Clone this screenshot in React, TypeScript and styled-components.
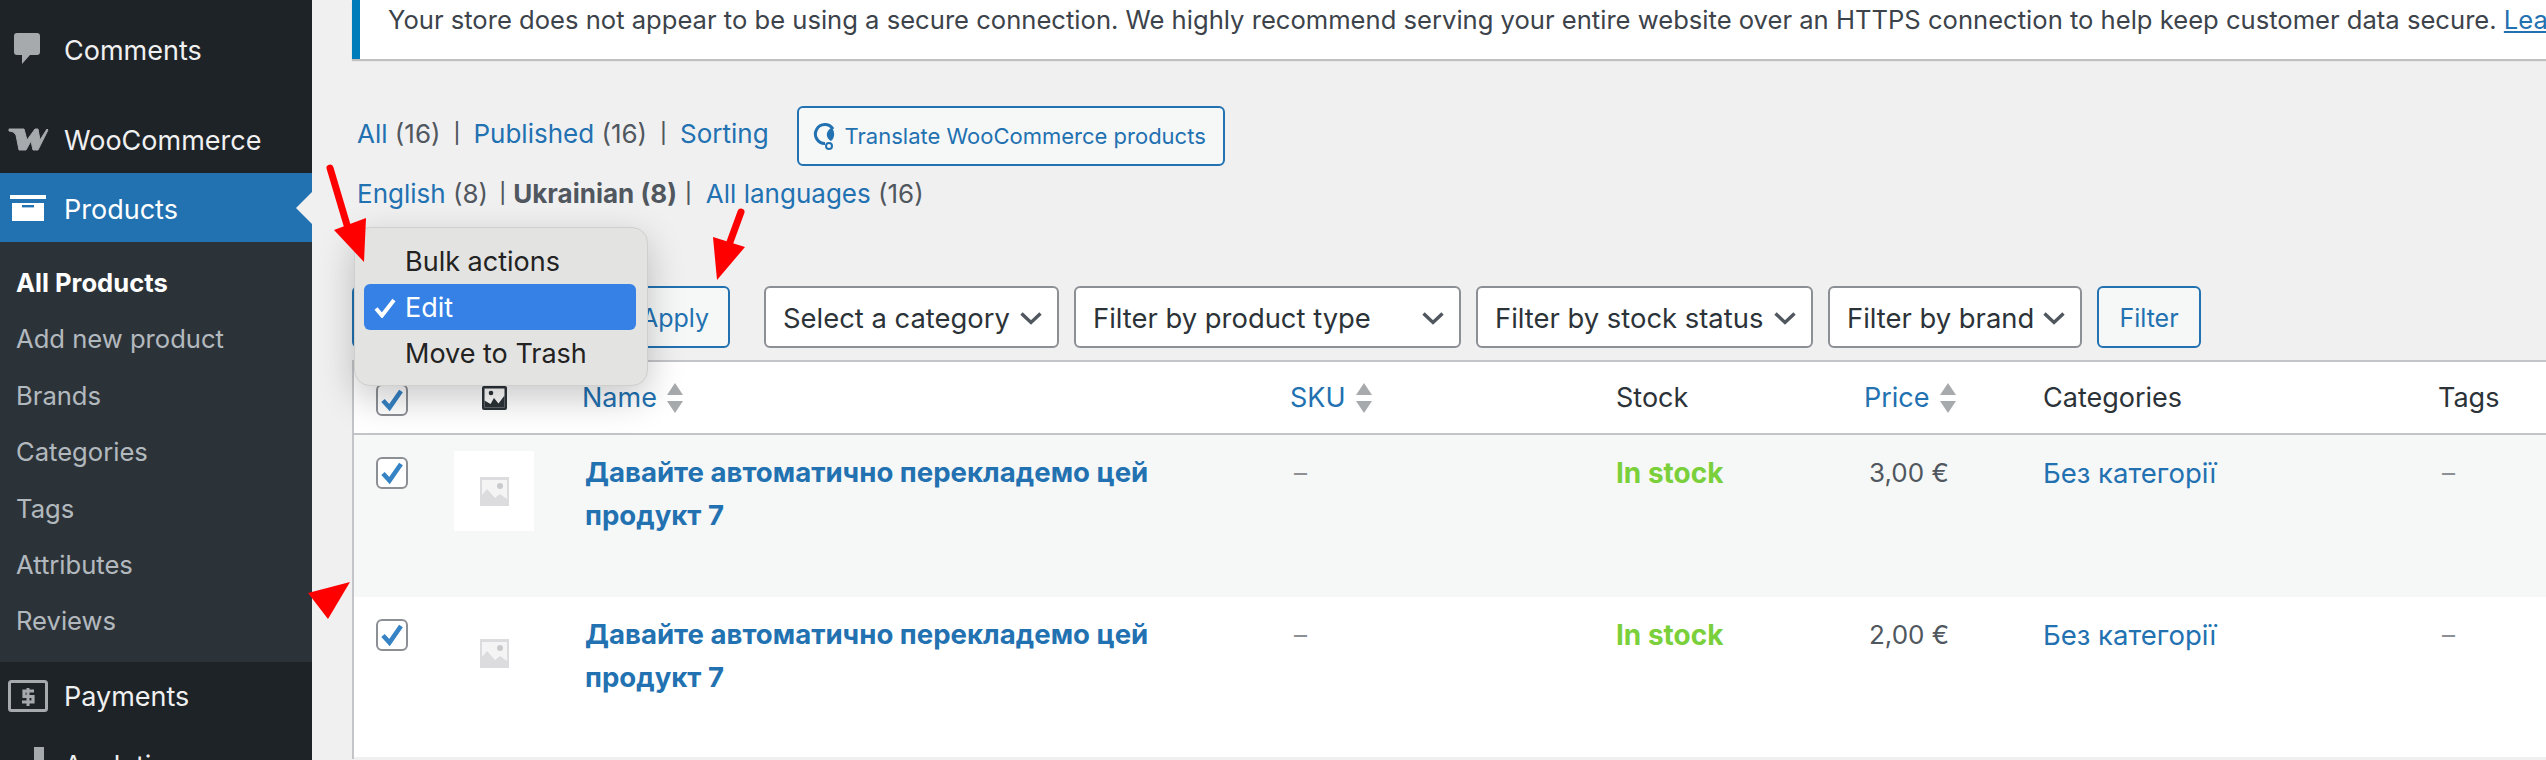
import React from 'react';
import styled, { createGlobalStyle } from 'styled-components';

const GlobalStyle = createGlobalStyle`
  html, body {
    margin: 0;
    padding: 0;
    background: #f0f0f1;
    font-family: Inter, 'Noto Sans', sans-serif;
    font-size: 26px;
    color: #50575e;
  }
`;

const Page = styled.div`
  position: relative;
  display: flex;
  width: 2546px;
  height: 760px;
  overflow: hidden;
`;

const Sidebar = styled.nav`
  width: 312px;
  flex: none;
  background: #1d2327;
  padding-top: 16px;
`;

const MenuItem = styled.div<{ $active?: boolean; $height?: number; $nudge?: number }>`
  position: relative;
  display: flex;
  align-items: center;
  box-sizing: border-box;
  height: ${(p) => p.$height ?? 69}px;
  padding: ${(p) => p.$nudge ?? 0}px 0 0 64px;
  font-size: 27px;
  color: #f0f0f1;
  background: ${(p) => (p.$active ? '#2271b1' : 'transparent')};
  ${(p) =>
    p.$active
      ? `color: #fff;
  &::after {
    content: '';
    position: absolute;
    right: 0;
    top: 50%;
    margin-top: -16px;
    border: 16px solid transparent;
    border-left: 0;
    border-right-color: #f0f0f1;
  }`
      : ''}
`;

const MenuIcon = styled.svg`
  position: absolute;
  left: 0;
  top: 0;
  width: 65px;
  height: 100%;
`;

const MenuSeparator = styled.div`
  height: 20px;
`;

const Submenu = styled.div`
  background: #2c3338;
  padding: 13px 0 12px 16px;
`;

const SubItem = styled.div<{ $current?: boolean }>`
  height: 56.4px;
  line-height: 56.4px;
  font-size: 25.6px;
  color: ${(p) => (p.$current ? '#fff' : 'rgba(240, 246, 252, 0.7)')};
  font-weight: ${(p) => (p.$current ? 700 : 400)};
`;

const Main = styled.main`
  position: relative;
  flex: 1;
  min-width: 0;
  padding-left: 40px;
  overflow: hidden;
`;

const Notice = styled.div`
  height: 59px;
  line-height: 40px;
  padding-left: 28px;
  background: #fff;
  border-left: 8px solid #007cba;
  box-shadow: 0 2px 1px rgba(0, 0, 0, 0.2);
  white-space: nowrap;
  font-size: 25.6px;
  color: #3c434a;
  overflow: hidden;
`;

const NoticeLink = styled.a`
  color: #2271b1;
  text-decoration: underline;
`;

const ViewsRow = styled.div<{ $top: number }>`
  display: flex;
  align-items: center;
  margin-top: ${(p) => p.$top}px;
  padding-left: 5px;
  height: 40px;
  white-space: pre;
`;

const Link = styled.a`
  color: #2271b1;
`;

const Sep = styled.span<{ $left?: number; $right?: number }>`
  font-size: 20px;
  font-weight: 500;
  color: #50575e;
  margin: 0 ${(p) => p.$right ?? 13}px 0 ${(p) => p.$left ?? 13}px;
`;

const Strong = styled.span`
  font-weight: 700;
`;

const TranslateButton = styled.button`
  display: flex;
  align-items: center;
  gap: 9px;
  box-sizing: border-box;
  width: 428px;
  height: 60px;
  margin: 6px 0 0 28px;
  padding: 0 0 0 13px;
  background: #f6f7f7;
  border: 2px solid #2271b1;
  border-radius: 6px;
  color: #2271b1;
  font: 400 22px Inter, sans-serif;
`;

const Toolbar = styled.div`
  display: flex;
  align-items: stretch;
  gap: 15px;
  margin-top: 73px;
  height: 62px;
`;

const ToolButton = styled.button<{ $width: number; $after?: number; $inset?: number }>`
  box-sizing: border-box;
  width: ${(p) => p.$width}px;
  margin-right: ${(p) => p.$after ?? 0}px;
  padding: 2px ${(p) => p.$inset ?? 0}px 0 0;
  background: #f6f7f7;
  border: 2px solid #2271b1;
  border-radius: 6px;
  color: #2271b1;
  font: 400 25px Inter, sans-serif;
`;

const Select = styled.div<{ $width: number; $focus?: boolean }>`
  display: flex;
  align-items: center;
  justify-content: space-between;
  box-sizing: border-box;
  width: ${(p) => p.$width}px;
  padding: 2px 15px 0 17px;
  background: #fff;
  border: 2px solid ${(p) => (p.$focus ? '#2271b1' : '#8c8f94')};
  border-radius: 6px;
  font-size: 27.4px;
  color: #2c3338;
  white-space: nowrap;
`;

const Chevron = styled.svg`
  width: 22px;
  height: 16px;
  flex: none;
`;

const Table = styled.div`
  width: 2400px;
  margin-top: 12px;
  border-left: 2px solid #c3c4c7;
  border-top: 2px solid #c3c4c7;
  background: #fff;
`;

const Row = styled.div<{ $height: number; $striped?: boolean; $header?: boolean }>`
  display: grid;
  grid-template-columns: 100px 128px 708px 326px 248px 179px 395px 1fr;
  height: ${(p) => p.$height}px;
  background: ${(p) => (p.$striped ? '#f6f7f7' : '#fff')};
  border-bottom: 2px solid ${(p) => (p.$header ? '#c3c4c7' : p.$striped ? 'transparent' : '#f0f0f1')};
  color: ${(p) => (p.$header ? '#2c3338' : '#50575e')};
`;

const HeadCell = styled.div<{ $shift?: number }>`
  display: flex;
  align-items: center;
  gap: 10px;
  height: 100%;
  padding-left: ${(p) => p.$shift ?? 0}px;
  font-size: 27px;
`;

const CheckCell = styled.div`
  padding: 22px 0 0 22px;
`;

const Cell = styled.div<{ $shift?: number; $color?: string; $bold?: boolean; $size?: number }>`
  padding: ${(p) => (p.$size ? 17 : 16)}px 0 0 ${(p) => p.$shift ?? 0}px;
  line-height: 43px;
  font-size: ${(p) => p.$size ?? 26}px;
  color: ${(p) => p.$color ?? 'inherit'};
  font-weight: ${(p) => (p.$bold ? 700 : 400)};
`;

const ProductName = styled.a`
  display: block;
  width: 600px;
  font-size: 27.6px;
  color: #2271b1;
  font-weight: 700;
`;

const CheckBox = styled.div`
  box-sizing: border-box;
  width: 32px;
  height: 32px;
  background: #fff;
  border: 2px solid #8c8f94;
  border-radius: 6px;
`;

const CheckMark = styled.svg`
  display: block;
  width: 28px;
  height: 28px;
`;

const ThumbCell = styled.div`
  padding-top: 16px;
`;

const Thumb = styled.div`
  display: flex;
  align-items: center;
  justify-content: center;
  width: 80px;
  height: 80px;
  background: #fff;
`;

const PopupMenu = styled.div`
  position: absolute;
  left: 42px;
  top: 227px;
  box-sizing: border-box;
  width: 294px;
  height: 159px;
  padding: 10px 11px 10px 9px;
  background: #e3e3e1;
  border: 1px solid #cfcfcd;
  border-radius: 16px;
  box-shadow: 0 12px 36px rgba(0, 0, 0, 0.22);
  color: #222;
`;

const PopupItem = styled.div<{ $selected?: boolean }>`
  position: relative;
  height: 46px;
  line-height: 47px;
  padding-left: 41px;
  border-radius: 6px;
  font-size: 27px;
  background: ${(p) => (p.$selected ? '#3581e6' : 'transparent')};
  color: ${(p) => (p.$selected ? '#fff' : '#222')};
`;

const PopupCheck = styled.svg`
  position: absolute;
  left: 10px;
  top: 14px;
  width: 22px;
  height: 20px;
`;

const Annotations = styled.svg`
  position: absolute;
  left: 0;
  top: 0;
  width: 2546px;
  height: 760px;
  pointer-events: none;
`;

const CheckIcon = () => (
  <CheckMark viewBox="0 0 28 28">
    <path d="M5 14.5l6.5 7L23 5" fill="none" stroke="#3582c4" strokeWidth="4.6" />
  </CheckMark>
);

const SelectChevron = () => (
  <Chevron viewBox="0 0 22 16">
    <path d="M1.5 3.5l9.5 9 9.5-9" fill="none" stroke="#50575e" strokeWidth="3.4" />
  </Chevron>
);

const Placeholder = () => (
  <svg width="29" height="29" viewBox="0 0 29 29">
    <rect width="29" height="29" fill="#dcdcde" />
    <path d="M2 3h25v19l-7-5-5 4-8-9-5 6z" fill="#f4f4f5" />
    <circle cx="20" cy="9" r="3" fill="#c9cacc" />
  </svg>
);

const SortArrows = () => (
  <svg width="16" height="30" viewBox="0 0 16 30">
    <path d="M8 0l8 12H0zM8 30L0 18h16z" fill="#a7aaad" />
  </svg>
);

const products = [
  { price: '3,00 €', striped: true },
  { price: '2,00 €', striped: false },
];

const subItems = ['Add new product', 'Brands', 'Categories', 'Tags', 'Attributes', 'Reviews'];

export default function App() {
  return (
    <Page>
      <GlobalStyle />
      <Sidebar>
        <MenuItem $height={68}>
          <MenuIcon viewBox="0 0 65 68">
            <path
              d="M17 17h20a3 3 0 0 1 3 3v16a3 3 0 0 1-3 3h-7l-8 9v-9h-5a3 3 0 0 1-3-3V20a3 3 0 0 1 3-3z"
              fill="#a7aaad"
            />
          </MenuIcon>
          Comments
        </MenuItem>
        <MenuSeparator />
        <MenuItem $height={69} $nudge={3}>
          <MenuIcon viewBox="0 0 65 69">
            <path
              d="M9 25H24L27 36L35 25H38L40 36L47 25L48 26L38 46H33L31 37L26 46H19L16 31Q14 27 9 27Z"
              fill="#a7aaad"
              stroke="#a7aaad"
              strokeLinejoin="round"
            />
          </MenuIcon>
          WooCommerce
        </MenuItem>
        <MenuItem $active $nudge={4}>
          <MenuIcon viewBox="0 0 65 69">
            <path d="M10 22h36v4H10zM12 30h32v18H12z" fill="#fff" />
            <path d="M22 32h12v2.4H22z" fill="#2271b1" />
          </MenuIcon>
          Products
        </MenuItem>
        <Submenu>
          <SubItem $current>All Products</SubItem>
          {subItems.map((item) => (
            <SubItem key={item}>{item}</SubItem>
          ))}
        </Submenu>
        <MenuItem>
          <MenuIcon viewBox="0 0 65 69">
            <rect x="9.5" y="19.5" width="37" height="29" rx="2" fill="none" stroke="#a7aaad" strokeWidth="3" />
            <path d="M34 29h-10v5.5h9v5.5H22" fill="none" stroke="#a7aaad" strokeWidth="3.2" />
            <path d="M28 26v18" stroke="#a7aaad" strokeWidth="3" />
          </MenuIcon>
          Payments
        </MenuItem>
        <MenuItem>
          <MenuIcon viewBox="0 0 65 69">
            <path d="M24 40h5v20h-5zM34 16h10v44H34z" fill="#a7aaad" />
          </MenuIcon>
          Analytics
        </MenuItem>
      </Sidebar>

      <Main>
        <Notice>
          Your store does not appear to be using a secure connection. We highly recommend serving your entire website
          over an HTTPS connection to help keep customer data secure. <NoticeLink>Learn more</NoticeLink>
        </Notice>

        <ViewsRow $top={54}>
          <Link>All</Link> (16)
          <Sep>|</Sep>
          <Link>Published</Link> (16)
          <Sep>|</Sep>
          <Link>Sorting</Link>
          <TranslateButton>
            <svg width="24" height="28" viewBox="0 0 24 28">
              <path d="M13 21.5A9.5 9.5 0 1 1 21 7" fill="none" stroke="#2271b1" strokeWidth="3" />
              <path d="M20 6c3 4 3 10-1 13-2-1-5-4-4-8 1-3 3-5 5-5z" fill="#2271b1" />
              <circle cx="17" cy="24" r="3" fill="none" stroke="#2271b1" strokeWidth="2" />
            </svg>
            Translate WooCommerce products
          </TranslateButton>
        </ViewsRow>
        <ViewsRow $top={20}>
          <Link>English</Link> (8) <Sep $left={4} $right={7}>|</Sep>
          <Strong>Ukrainian (8)</Strong>
          <Sep $left={8} $right={14}>|</Sep>
          <Link>All languages</Link> (16)
        </ViewsRow>

        <Toolbar>
          <Select $width={258} $focus />
          <ToolButton $width={105} $after={19} $inset={5}>
            Apply
          </ToolButton>
          <Select $width={295}>
            Select a category
            <SelectChevron />
          </Select>
          <Select $width={387}>
            Filter by product type
            <SelectChevron />
          </Select>
          <Select $width={337}>
            Filter by stock status
            <SelectChevron />
          </Select>
          <Select $width={254}>
            Filter by brand
            <SelectChevron />
          </Select>
          <ToolButton $width={104}>Filter</ToolButton>
        </Toolbar>

        <Table>
          <Row $height={71} $header>
            <CheckCell>
              <CheckBox>
                <CheckIcon />
              </CheckBox>
            </CheckCell>
            <HeadCell $shift={28}>
              <svg width="25" height="24" viewBox="0 0 25 24">
                <rect width="25" height="24" rx="2" fill="#2c3338" />
                <path d="M2.500 2.500h20v19h-20z" fill="#fff" />
                <path d="M2.500 21.500v-7l6 3.500 3.500-6 4.500 5.500 6-8v12z" fill="#2c3338" />
                <circle cx="9" cy="7" r="2.300" fill="#2c3338" />
              </svg>
            </HeadCell>
            <HeadCell>
              <Link>Name</Link>
              <SortArrows />
            </HeadCell>
            <HeadCell>
              <Link>SKU</Link>
              <SortArrows />
            </HeadCell>
            <HeadCell>Stock</HeadCell>
            <HeadCell>
              <Link>Price</Link>
              <SortArrows />
            </HeadCell>
            <HeadCell>Categories</HeadCell>
            <HeadCell>Tags</HeadCell>
          </Row>
          {products.map((product) => (
            <Row key={product.price} $height={160} $striped={product.striped}>
              <CheckCell>
                <CheckBox>
                  <CheckIcon />
                </CheckBox>
              </CheckCell>
              <ThumbCell>
                <Thumb>
                  <Placeholder />
                </Thumb>
              </ThumbCell>
              <Cell $shift={3}>
                <ProductName>Давайте автоматично перекладемо цей продукт 7</ProductName>
              </Cell>
              <Cell $shift={4} $color="#8c8f94">
                –
              </Cell>
              <Cell $color="#7ad03a" $bold $size={28}>
                In stock
              </Cell>
              <Cell $shift={5}>{product.price}</Cell>
              <Cell $size={27.5}>
                <Link>Без категорії</Link>
              </Cell>
              <Cell $shift={4} $color="#8c8f94">
                –
              </Cell>
            </Row>
          ))}
        </Table>

        <PopupMenu>
          <PopupItem>Bulk actions</PopupItem>
          <PopupItem $selected>
            <PopupCheck viewBox="0 0 22 20">
              <path d="M2 10.500l6 7L20 2" fill="none" stroke="#fff" strokeWidth="4" />
            </PopupCheck>
            Edit
          </PopupItem>
          <PopupItem>Move to Trash</PopupItem>
        </PopupMenu>
      </Main>

      <Annotations viewBox="0 0 2546 760">
        <path d="M330 168l17 57" stroke="#f00" strokeWidth="7" strokeLinecap="round" />
        <path d="M334 230l32-12-2 44z" fill="#f00" />
        <path d="M741 212l-11 30" stroke="#f00" strokeWidth="7" strokeLinecap="round" />
        <path d="M713 237l32 10-28 33z" fill="#f00" />
        <path d="M308 593l42-11-22 37z" fill="#f00" />
      </Annotations>
    </Page>
  );
}
